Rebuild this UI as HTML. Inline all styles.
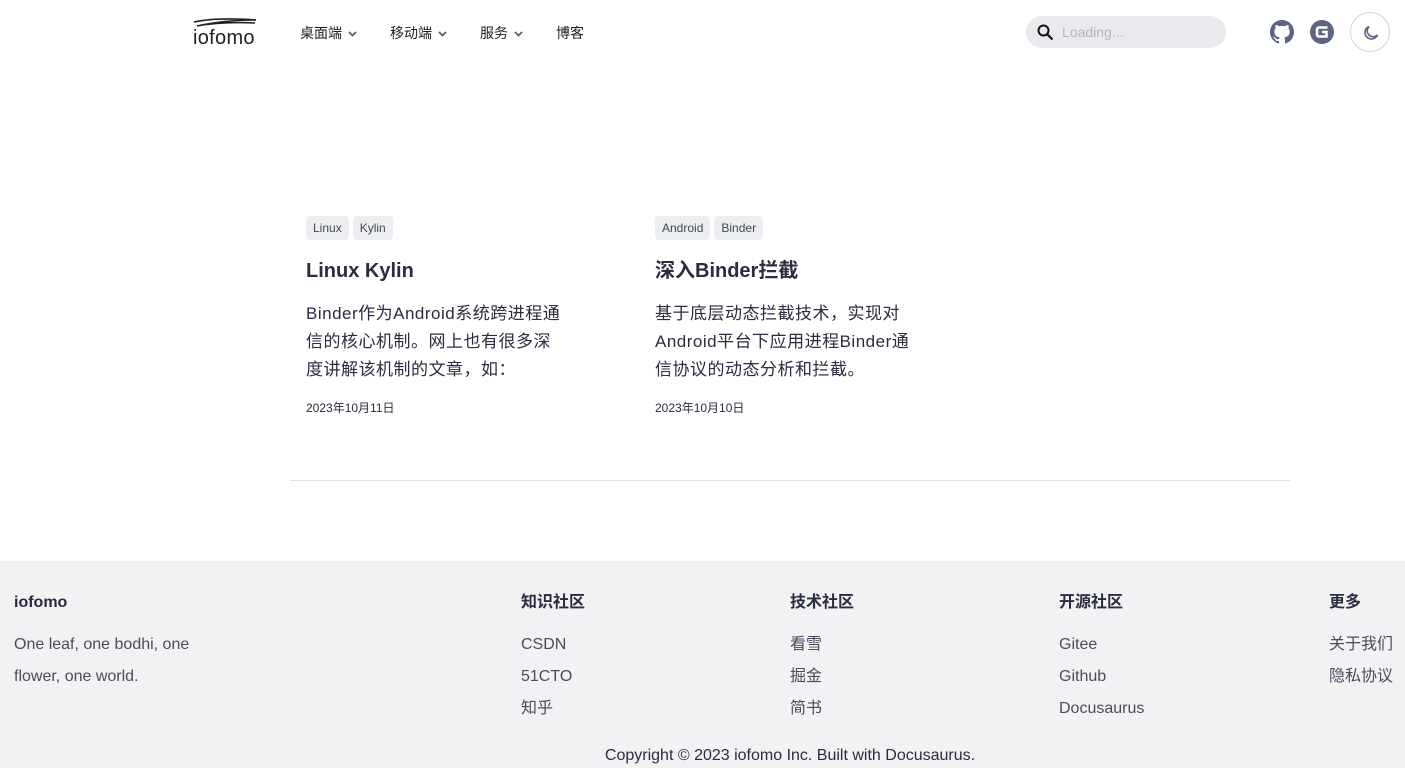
<!DOCTYPE html>
<html><head><meta charset="utf-8"><style>
*{margin:0;padding:0;box-sizing:border-box}
body{width:1405px;height:768px;overflow:hidden;background:#fff;font-family:"Liberation Sans","Noto Sans CJK SC",sans-serif;color:#2a2c3f}
.nav{position:absolute;top:0;left:0;width:1405px;height:64px}
.logo{position:absolute;left:193px;top:17px}
.logo span{position:absolute;top:10px;left:0;font-size:20px;color:#222;letter-spacing:0.3px}
.ni{position:absolute;top:23px;font-size:14px;color:#1c1e21}
.ni svg{margin-left:6px;vertical-align:1px}
.search{position:absolute;left:1026px;top:16px;width:200px;height:32px;border-radius:16px;background:#e9eaee}
.search span{position:absolute;left:36px;top:8px;font-size:14px;color:#b4b6bd}
.card{position:absolute;top:216px;width:300px}
.tags{display:flex;gap:4px}
.tag{background:#ebedf0;border-radius:4px;font-size:12px;padding:5px 7px;color:#444950;height:24px}
.card h2{font-size:20px;font-weight:700;margin-top:18px;line-height:26px}
.card p{font-size:17px;line-height:28px;margin-top:16px;color:#2a2c3f;white-space:nowrap;letter-spacing:0.5px}
.date{font-size:12px;margin-top:15px;color:#2a2c3f}
.hr{position:absolute;left:290px;top:480px;width:1000px;height:1px;background:#dfe3ea}
.foot{position:absolute;top:561px;left:0;width:1405px;height:207px;background:#f2f2f4}
.fh{position:absolute;top:33px;font-size:16px;font-weight:700;line-height:18px}
.fl{position:absolute;font-size:16px;color:#4a4c5c;line-height:32px}
</style></head><body>
<div class="nav">
<div class="logo"><svg width="64" height="12" viewBox="0 0 64 12"><path d="M1 4 C15 1 35 0 63 2 C40 2 22 4 4 8 C20 5 40 4 62 5" stroke="#222" stroke-width="1.6" fill="none"/></svg><span>iofomo</span></div>
<div class="ni" style="left:300px">桌面端<svg width="9" height="6"><path d="M1 1l3.5 3.5L8 1" stroke="#555a70" stroke-width="1.8" fill="none"/></svg></div>
<div class="ni" style="left:390px">移动端<svg width="9" height="6"><path d="M1 1l3.5 3.5L8 1" stroke="#555a70" stroke-width="1.8" fill="none"/></svg></div>
<div class="ni" style="left:480px">服务<svg width="9" height="6"><path d="M1 1l3.5 3.5L8 1" stroke="#555a70" stroke-width="1.8" fill="none"/></svg></div>
<div class="ni" style="left:556px">博客</div>
<div class="search"><svg style="position:absolute;left:11px;top:8px" width="17" height="17" viewBox="0 0 17 17"><circle cx="6.5" cy="6.5" r="5" stroke="#111" stroke-width="2" fill="none"/><path d="M10 10l5.5 5.5" stroke="#111" stroke-width="2.2"/></svg><span>Loading...</span></div>
<svg style="position:absolute;left:1270px;top:20px" width="24" height="24" viewBox="0 0 16 16"><path fill="#5c6383" d="M8 0C3.58 0 0 3.58 0 8c0 3.54 2.29 6.53 5.47 7.59.4.07.55-.17.55-.38v-1.33c-2.23.48-2.7-1.07-2.7-1.070-.36-.92-.89-1.17-.89-1.17-.73-.5.06-.49.06-.49.8.06 1.23.83 1.23.83.72 1.22 1.87.87 2.33.66.07-.52.28-.87.51-1.07-1.78-.2-3.64-.89-3.640-3.95 0-.87.31-1.59.82-2.15-.08-.2-.36-1.02.08-2.12 0 0 .67-.21 2.2.82a7.6 7.6 0 014 0c1.53-1.04 2.2-.82 2.2-.82.44 1.1.16 1.92.08 2.12.51.56.82 1.27.82 2.15 0 3.07-1.870 3.75-3.65 3.95.29.25.54.73.54 1.48v2.2c0 .21.15.46.55.38A8 8 0 0016 8c0-4.42-3.58-8-8-8z"/></svg>
<svg style="position:absolute;left:1310px;top:20px" width="24" height="24" viewBox="0 0 24 24"><circle cx="12" cy="12" r="12" fill="#5c6383"/><path d="M17.5 7.5H9a2 2 0 00-2 2v5a2 2 0 002 2h7.5v-4.5h-4.5" stroke="#fff" stroke-width="2.6" fill="none"/></svg>
<div style="position:absolute;left:1350px;top:12px;width:40px;height:40px;border-radius:50%;border:1px solid #d0d3de"><svg style="position:absolute;left:11px;top:11px" width="18" height="18" viewBox="0 0 18 18"><path d="M7 2.5A6.5 6.5 0 1015.5 11 5 5 0 017 2.5z" stroke="#5c6383" stroke-width="1.6" fill="none"/></svg></div>
</div>
<div class="card" style="left:306px"><div class="tags"><span class="tag">Linux</span><span class="tag">Kylin</span></div><h2>Linux Kylin</h2><p>Binder作为Android系统跨进程通<br>信的核心机制。网上也有很多深<br>度讲解该机制的文章，如：</p><div class="date">2023年10月11日</div></div>
<div class="card" style="left:655px"><div class="tags"><span class="tag">Android</span><span class="tag">Binder</span></div><h2>深入Binder拦截</h2><p>基于底层动态拦截技术，实现对<br>Android平台下应用进程Binder通<br>信协议的动态分析和拦截。</p><div class="date">2023年10月10日</div></div>
<div class="hr"></div>
<div class="foot">
<div class="fh" style="left:14px">iofomo</div>
<div class="fl" style="left:14px;top:68px;width:200px">One leaf, one bodhi, one flower, one world.</div>
<div class="fh" style="left:521px">知识社区</div>
<div class="fl" style="left:521px;top:68px">CSDN<br>51CTO<br>知乎</div>
<div class="fh" style="left:790px">技术社区</div>
<div class="fl" style="left:790px;top:68px">看雪<br>掘金<br>简书</div>
<div class="fh" style="left:1059px">开源社区</div>
<div class="fl" style="left:1059px;top:68px">Gitee<br>Github<br>Docusaurus</div>
<div class="fh" style="left:1329px">更多</div>
<div class="fl" style="left:1329px;top:68px;white-space:nowrap">关于我们<br>隐私协议</div>
<div style="position:absolute;left:0;width:1580px;text-align:center;top:186px;font-size:16px">Copyright © 2023 iofomo Inc. Built with Docusaurus.</div>
</div>
</body></html>
